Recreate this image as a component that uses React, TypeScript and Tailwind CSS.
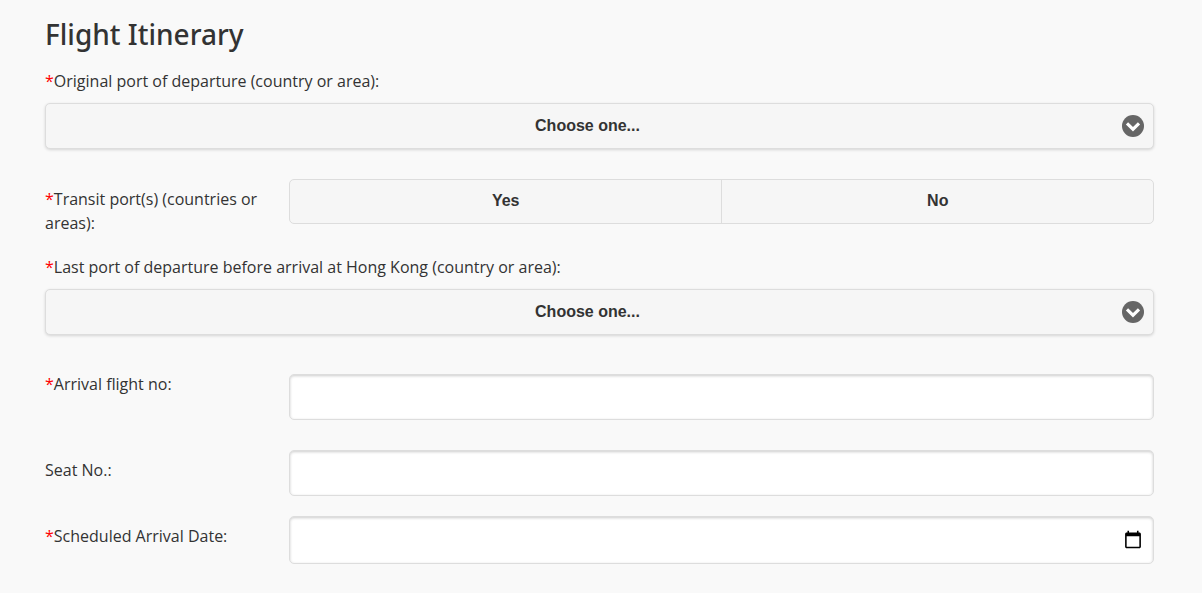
import React, { useState } from 'react';

interface PortSelectProps {
  id: string;
  label: string;
}

interface TextRowProps {
  id: string;
  label: string;
  required?: boolean;
}

const inputClass =
  "block w-full rounded-[5px] border border-[#ddd] bg-white px-2 text-base text-[#333] shadow-[inset_0_1px_3px_rgba(0,0,0,0.2)] outline-none focus:border-[#38c]";

const Required = () => <span className="text-[#f00]">*</span>;

const PortSelect: React.FC<PortSelectProps> = ({ id, label }) => {
  const [value, setValue] = useState('');

  return (
    <div>
      <label htmlFor={id} className="block leading-6">
        <Required />
        {label}
      </label>
      <div className="relative mt-2.5">
        <select
          id={id}
          value={value}
          onChange={(e) => setValue(e.target.value)}
          className="block h-[46px] w-full appearance-none rounded-[5px] border border-[#ddd] bg-[#f6f6f6] pr-10 pl-4 font-['Liberation_Sans',Arial,sans-serif] text-base font-bold text-[#333] shadow-[0_1px_3px_rgba(0,0,0,0.15)] [text-align-last:center]"
        >
          <option value="">Choose one...</option>
          <option value="CN">Mainland China</option>
          <option value="JP">Japan</option>
          <option value="SG">Singapore</option>
          <option value="GB">United Kingdom</option>
        </select>
        <svg
          viewBox="0 0 22 22"
          className="pointer-events-none absolute inset-y-0 right-2.5 my-auto size-[22px]"
          aria-hidden="true"
        >
          <circle cx="11" cy="11" r="11" fill="#666" />
          <path d="M3.9 9.5 6.1 7.3 11 12 15.9 7.3 18.1 9.5 11 16.5z" fill="#fff" />
        </svg>
      </div>
    </div>
  );
};

const TextRow: React.FC<TextRowProps> = ({ id, label, required = false }) => (
  <div className="flex items-start">
    <label htmlFor={id} className="w-[22%] shrink-0 pt-2 pr-5 leading-6">
      {required && <Required />}
      {label}
    </label>
    <input id={id} type="text" className={`${inputClass} h-[46px]`} />
  </div>
);

export default function App() {
  const [transit, setTransit] = useState('');

  return (
    <main className="min-h-screen bg-[#f9f9f9] px-[45px] pt-3.5 pb-7 font-['Open_Sans','Noto_Sans',sans-serif] text-base font-normal text-[#333]">
      <form className="pr-[3px]">
        <h2 className="font-['Noto_Sans','Open_Sans',sans-serif] text-[28px] leading-10 font-medium">
          Flight Itinerary
        </h2>

        <div className="mt-[15px]">
          <PortSelect id="origin" label="Original port of departure (country or area):" />
        </div>

        {/* Transit yes / no */}
        <div role="radiogroup" aria-labelledby="transit-label" className="mt-[30px] flex items-start">
          <div id="transit-label" className="w-[22%] shrink-0 pt-2 pr-5 leading-6">
            <Required />
            Transit port(s) (countries or areas):
          </div>
          <div className="grid h-[45px] flex-1 grid-cols-2 overflow-hidden rounded-[5px] border border-[#ddd] bg-[#f6f6f6]">
            {['Yes', 'No'].map((option) => (
              <label
                key={option}
                className="flex cursor-pointer items-center justify-center border-[#ddd] pb-0.5 font-['Liberation_Sans',Arial,sans-serif] font-bold not-first:border-l has-checked:bg-[#38c] has-checked:text-white"
              >
                <input
                  type="radio"
                  name="transit"
                  value={option}
                  checked={transit === option}
                  onChange={() => setTransit(option)}
                  className="sr-only"
                />
                {option}
              </label>
            ))}
          </div>
        </div>

        <div className="mt-5">
          <PortSelect id="last-port" label="Last port of departure before arrival at Hong Kong (country or area):" />
        </div>

        <div className="mt-[37px] flex items-start">
          <label htmlFor="flight" className="w-[22%] shrink-0 pr-5 leading-6">
            <Required />
            Arrival flight no:
          </label>
          <input id="flight" type="text" className={`${inputClass} mt-0.5 h-[46px]`} />
        </div>

        <div className="mt-[30px]">
          <TextRow id="seat" label="Seat No.:" />
        </div>

        {/* Arrival date */}
        <div className="mt-5 flex items-start">
          <label htmlFor="arrival-date" className="w-[22%] shrink-0 pt-2 pr-5 leading-6">
            <Required />
            Scheduled Arrival Date:
          </label>
          <input
            id="arrival-date"
            type="date"
            className={`${inputClass} h-12 [&::-webkit-calendar-picker-indicator]:size-5 [&::-webkit-datetime-edit]:invisible`}
          />
        </div>
      </form>
    </main>
  );
}
